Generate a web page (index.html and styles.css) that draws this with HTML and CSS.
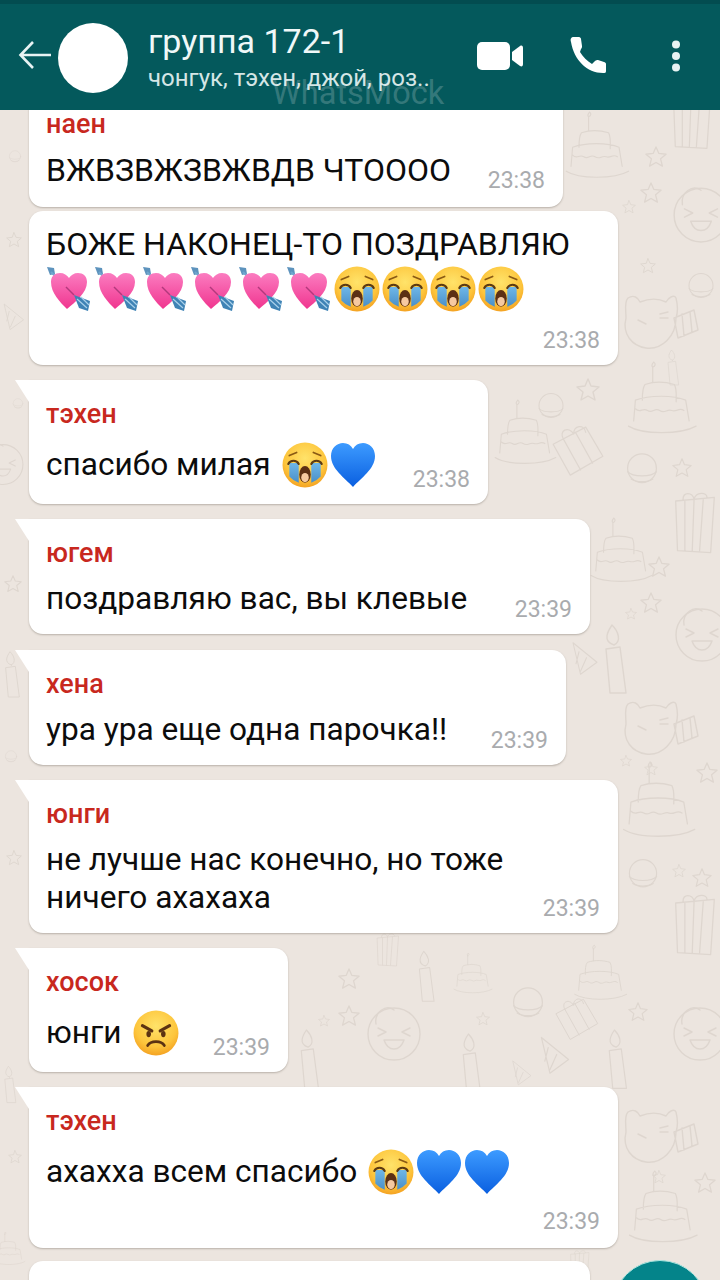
FILE: index.html
```html
<!DOCTYPE html>
<html lang="en">

<head>
    <meta charset="UTF-8">
    <meta name="viewport" content="width=device-width, initial-scale=1.0">
    <title>группа 172-1</title>
    <link rel="stylesheet" href="styles.css">
</head>

<body>
    <!-- shared drawings -->
    <svg class="defs" width="0" height="0">
        <defs>
            <radialGradient id="faceFill" cx="50%" cy="35%" r="70%">
                <stop offset="0" stop-color="#ffe36a" />
                <stop offset="0.65" stop-color="#fdc53c" />
                <stop offset="1" stop-color="#f29a1c" />
            </radialGradient>
            <linearGradient id="pinkFill" x1="0" y1="0" x2="0" y2="1">
                <stop offset="0" stop-color="#fb7cc0" />
                <stop offset="1" stop-color="#f0358f" />
            </linearGradient>
            <linearGradient id="blueFill" x1="0" y1="0" x2="0" y2="1">
                <stop offset="0" stop-color="#3d9bff" />
                <stop offset="1" stop-color="#0a5fe0" />
            </linearGradient>
            <linearGradient id="tearFill" x1="0" y1="0" x2="0" y2="1">
                <stop offset="0" stop-color="#6fb7e8" />
                <stop offset="1" stop-color="#4a8fc8" />
            </linearGradient>
            <symbol id="crying" viewBox="0 0 44 44">
                <circle cx="22" cy="22" r="21.5" fill="url(#faceFill)" />
                <path d="M7 20h9v19a21 21 0 0 1-9-6z" fill="url(#tearFill)" />
                <path d="M28 20h9v13a21 21 0 0 1-9 6z" fill="url(#tearFill)" />
                <path d="M6 21c2-4 8-4 10 0M28 21c2-4 8-4 10 0" fill="none" stroke="#5c3a12" stroke-width="2" stroke-linecap="round" />
                <path d="M7 13l7-3M37 13l-7-3" fill="none" stroke="#8a5a14" stroke-width="1.6" stroke-linecap="round" />
                <ellipse cx="22" cy="31" rx="5.5" ry="8" fill="#5c3014" />
                <ellipse cx="22" cy="34" rx="3.6" ry="4.4" fill="#f6c9a0" />
            </symbol>
            <symbol id="angry" viewBox="0 0 44 44">
                <circle cx="22" cy="22" r="21.5" fill="url(#faceFill)" />
                <path d="M9 15l9 5M35 15l-9 5" fill="none" stroke="#5c3212" stroke-width="3" stroke-linecap="round" />
                <ellipse cx="15" cy="23" rx="2.2" ry="3" fill="#5c3212" />
                <ellipse cx="29" cy="23" rx="2.2" ry="3" fill="#5c3212" />
                <path d="M14 34c3-5 13-5 16 0" fill="none" stroke="#5c3212" stroke-width="2.6" stroke-linecap="round" />
            </symbol>
            <symbol id="blue-heart" viewBox="0 0 46 46">
                <path d="M23 45C15 36 1 27 1 14 1 6 7 1 13 1c4.500 0 8 2 10 6 2-4 5.500-6 10-6 6 0 12 5 12 13 0 13-14 22-22 31z" fill="url(#blueFill)" />
            </symbol>
            <symbol id="arrow-heart" viewBox="0 0 46 46">
                <path d="M1 1l3 8 5-1-1-6z" fill="#5d93bd" />
                <path d="M5 6l34 34" stroke="#6fa6cf" stroke-width="2" />
                <path d="M21 43C14 36 5 27 5 16 5 10 9 7 14 7c4 0 7 2 9 5 2-3 5-5 9-5 5 0 9 3 9 9 0 11-12 20-20 27z" fill="url(#pinkFill)" />
                <path d="M28 29l16 6-2 10-9-3z" fill="#3f83b5" />
                <path d="M31 33l10 9M35 31l8 8" stroke="#a9d0ea" stroke-width="1.200" />
                <path d="M20 21l8 8" stroke="#b2397c" stroke-width="1.500" />
            </symbol>

            <symbol id="d-cake" viewBox="0 0 90 90" overflow="visible">
                <path d="M32 24V6M32 6c-3-3 2-6 1-6 3 2 2 5-1 6M20 44c0-8 0-14 3-18 12-4 24-3 34 0 3 6 2 12 2 20M10 68l2-24c16-6 44-6 58 0l4 24M4 74c16 10 60 10 78 0M12 54c6 6 8-2 14 2s8-4 14 0 8-2 14 0 8-4 14 0" />
            </symbol>
            <symbol id="d-gift" viewBox="0 0 70 70" overflow="visible">
                <path d="M6 26l38-20 20 34-38 22zM18 20l20 36M32 12l20 36M30 14c-6-10-18-4-12 6M30 14c0-10 12-12 14-2" />
            </symbol>
            <symbol id="d-box" viewBox="0 0 50 70" overflow="visible">
                <path d="M4 10l42-4-4 60-36-2zM14 10l0 54M24 8l-2 56M34 8l-4 56M12 8c0-8 10-8 12 0 2-8 14-8 14-2" />
            </symbol>
            <symbol id="d-ball" viewBox="0 0 40 40" overflow="visible">
                <circle cx="20" cy="18" r="16" />
                <path d="M4 22c6 6 26 6 32 0M8 30c6 4 18 4 24 0" />
            </symbol>
            <symbol id="d-face" viewBox="0 0 60 60" overflow="visible">
                <circle cx="30" cy="32" r="26" />
                <path d="M12 22c-2-12 10-20 18-14M14 26l8 4-8 4M46 26l-8 4 8 4M20 38c4 12 16 12 20 0z" />
            </symbol>
            <symbol id="d-cat" viewBox="0 0 76 60" overflow="visible">
                <path d="M6 6c6-4 10 0 12 4 10-4 18-4 26 0 2-4 8-8 10-4 2 8 2 14 0 20 0 18-14 32-30 30C10 54 0 42 4 26 4 18 2 10 6 6zM16 28l8 4M38 22l8-2M38 26l8 0M52 26l20-8 4 20-20 8zM60 22l2 22M68 20l2 20" />
            </symbol>
            <symbol id="d-candle" viewBox="0 0 30 70" overflow="visible">
                <path d="M6 24l14-2 6 46H10zM14 20C2 16 8 6 12 0c6 6 10 16 2 20z" />
            </symbol>
            <symbol id="d-star" viewBox="0 0 24 24" overflow="visible">
                <path d="M12 1l3 7 8 1-6 5 2 8-7-4-7 4 2-8-6-5 8-1z" />
            </symbol>
            <symbol id="d-hat" viewBox="0 0 40 50" overflow="visible">
                <path d="M4 2l32 26-22 16zM12 14l-4 16M22 22l-8 18" />
            </symbol>
        </defs>
    </svg>

    <!-- wallpaper doodles -->
    <svg class="wallpaper" width="720" height="1280" viewBox="0 0 720 1280">
        <g class="doodles">
            <use href="#d-cake" x="563" y="112" width="72" height="72" />
            <use href="#d-box" x="670" y="90" width="44" height="62" />
            <use href="#d-star" x="645" y="146" width="22" height="22" />
            <use href="#d-star" x="640" y="182" width="22" height="22" />
            <use href="#d-star" x="622" y="200" width="14" height="14" />
            <use href="#d-face" x="670" y="182" width="62" height="62" />
            <use href="#d-star" x="640" y="258" width="16" height="16" />
            <use href="#d-ball" x="686" y="272" width="30" height="30" />
            <use href="#d-cat" x="622" y="292" width="76" height="60" />
            <use href="#d-candle" x="664" y="350" width="18" height="36" />
            <use href="#d-cake" x="625" y="362" width="78" height="78" />
            <use href="#d-ball" x="536" y="392" width="30" height="30" />
            <use href="#d-star" x="576" y="378" width="24" height="24" />
            <use href="#d-cake" x="492" y="400" width="70" height="70" />
            <use href="#d-gift" x="548" y="422" width="60" height="60" />
            <use href="#d-ball" x="624" y="452" width="36" height="36" />
            <use href="#d-star" x="672" y="458" width="20" height="20" />
            <use href="#d-box" x="672" y="488" width="46" height="72" />
            <use href="#d-cake" x="588" y="515" width="70" height="76" />
            <use href="#d-star" x="648" y="556" width="22" height="22" />
            <use href="#d-star" x="640" y="592" width="22" height="22" />
            <use href="#d-star" x="625" y="608" width="12" height="12" />
            <use href="#d-face" x="672" y="600" width="60" height="66" />
            <use href="#d-candle" x="600" y="625" width="30" height="70" />
            <use href="#d-hat" x="570" y="640" width="30" height="40" />
            <use href="#d-cat" x="622" y="698" width="76" height="60" />
            <use href="#d-star" x="620" y="755" width="12" height="12" />
            <use href="#d-star" x="644" y="762" width="14" height="14" />
            <use href="#d-star" x="696" y="762" width="22" height="22" />
            <use href="#d-cake" x="620" y="762" width="82" height="82" />
            <use href="#d-ball" x="626" y="858" width="34" height="34" />
            <use href="#d-star" x="672" y="864" width="14" height="14" />
            <use href="#d-star" x="692" y="868" width="20" height="20" />
            <use href="#d-box" x="672" y="890" width="46" height="72" />
            <use href="#d-cake" x="566" y="945" width="72" height="60" />
            <use href="#d-box" x="366" y="933" width="44" height="35" />
            <use href="#d-candle" x="415" y="945" width="22" height="64" />
            <use href="#d-cake" x="452" y="950" width="44" height="50" />
            <use href="#d-ball" x="510" y="985" width="36" height="38" />
            <use href="#d-gift" x="552" y="995" width="50" height="50" />
            <use href="#d-star" x="338" y="968" width="22" height="22" />
            <use href="#d-star" x="338" y="1005" width="22" height="22" />
            <use href="#d-star" x="318" y="1015" width="12" height="12" />
            <use href="#d-star" x="476" y="1012" width="14" height="14" />
            <use href="#d-star" x="628" y="1002" width="20" height="20" />
            <use href="#d-face" x="364" y="1000" width="60" height="64" />
            <use href="#d-face" x="670" y="1000" width="60" height="64" />
            <use href="#d-candle" x="296" y="1030" width="26" height="60" />
            <use href="#d-candle" x="458" y="1034" width="26" height="60" />
            <use href="#d-candle" x="604" y="1030" width="26" height="60" />
            <use href="#d-hat" x="538" y="1035" width="34" height="44" />
            <use href="#d-hat" x="510" y="1060" width="24" height="28" />
            <use href="#d-cat" x="622" y="1106" width="76" height="60" />
            <use href="#d-star" x="652" y="1170" width="14" height="14" />
            <use href="#d-star" x="694" y="1172" width="22" height="22" />
            <use href="#d-cake" x="626" y="1168" width="78" height="84" />
            <use href="#d-box" x="560" y="1250" width="40" height="30" />
            <use href="#d-ball" x="8" y="150" width="14" height="14" />
            <use href="#d-star" x="6" y="232" width="16" height="16" />
            <use href="#d-hat" x="2" y="300" width="24" height="36" />
            <use href="#d-ball" x="12" y="398" width="12" height="12" />
            <use href="#d-face" x="-20" y="440" width="46" height="46" />
            <use href="#d-star" x="4" y="575" width="18" height="18" />
            <use href="#d-candle" x="2" y="650" width="20" height="50" />
            <use href="#d-ball" x="4" y="750" width="14" height="14" />
            <use href="#d-star" x="6" y="850" width="16" height="16" />
            <use href="#d-candle" x="2" y="1060" width="16" height="50" />
            <use href="#d-star" x="8" y="1150" width="14" height="14" />
            <use href="#d-cake" x="-8" y="1230" width="36" height="40" />
        </g>
    </svg>

    <header class="app-header">
        <svg class="back-icon" width="33" height="32" viewBox="0 0 33 32">
            <path d="M33 16H3M15 3L2.500 16 15 29" fill="none" stroke="#e8f3f3" stroke-width="2.600" />
        </svg>
        <div class="avatar"></div>
        <div class="chat-title">
            <div class="chat-name">группа 172-1</div>
            <div class="chat-members">чонгук, тэхен, джой, роз..</div>
        </div>
        <div class="header-actions">
            <svg class="video-icon" width="46" height="28" viewBox="0 0 46 28">
                <rect x="0" y="0" width="33" height="28" rx="5" fill="#fff" />
                <path d="M35 10l8-6c2-1 3 0 3 2v16c0 2-1 3-3 2l-8-6z" fill="#fff" />
            </svg>
            <svg class="phone-icon" width="36" height="36" viewBox="0 0 36 36">
                <path d="M1 5C0 2 1 0 4 0h5c1 0 2 1 2 2l1 7c0 1 0 2-1 3l-1 3c3 5 7 9 12 12l3-3c1-1 2-1 3-1l6 2c1 0 2 1 2 2v7c0 2-1 2-3 2C17 36 4 23 1 5z" fill="#fff" />
            </svg>
            <svg class="menu-icon" width="10" height="32" viewBox="0 0 10 32">
                <circle cx="5" cy="4.500" r="4" fill="#e8f3f3" />
                <circle cx="5" cy="16" r="4" fill="#e8f3f3" />
                <circle cx="5" cy="27.500" r="4" fill="#e8f3f3" />
            </svg>
        </div>
        <div class="watermark">WhatsMock</div>
    </header>

    <main class="chat-messages">
        <div class="message first width-534">
            <div class="sender">наен</div>
            <div class="message-row">
                <div class="message-text caps">ВЖВЗВЖЗВЖВДВ ЧТОООО</div>
                <div class="time">23:38</div>
            </div>
        </div>

        <div class="message follow width-589">
            <div class="message-text caps">БОЖЕ НАКОНЕЦ-ТО ПОЗДРАВЛЯЮ</div>
            <div class="emoji-line">
                <svg class="emoji"><use href="#arrow-heart" /></svg>
                <svg class="emoji"><use href="#arrow-heart" /></svg>
                <svg class="emoji"><use href="#arrow-heart" /></svg>
                <svg class="emoji"><use href="#arrow-heart" /></svg>
                <svg class="emoji"><use href="#arrow-heart" /></svg>
                <svg class="emoji"><use href="#arrow-heart" /></svg>
                <svg class="emoji"><use href="#crying" /></svg>
                <svg class="emoji"><use href="#crying" /></svg>
                <svg class="emoji"><use href="#crying" /></svg>
                <svg class="emoji"><use href="#crying" /></svg>
            </div>
            <div class="time-row"><div class="time">23:38</div></div>
        </div>

        <div class="message tail width-459">
            <div class="sender">тэхен</div>
            <div class="message-row">
                <div class="message-text with-emoji">спасибо милая
                    <svg class="emoji"><use href="#crying" /></svg><svg class="emoji"><use href="#blue-heart" /></svg>
                </div>
                <div class="time">23:38</div>
            </div>
        </div>

        <div class="message tail width-561 spaced">
            <div class="sender">югем</div>
            <div class="message-row">
                <div class="message-text">поздравляю вас, вы клевые</div>
                <div class="time">23:39</div>
            </div>
        </div>

        <div class="message tail width-537">
            <div class="sender">хена</div>
            <div class="message-row">
                <div class="message-text">ура ура еще одна парочка!!</div>
                <div class="time">23:39</div>
            </div>
        </div>

        <div class="message tail width-589">
            <div class="sender">юнги</div>
            <div class="message-row">
                <div class="message-text">не лучше нас конечно, но тоже<br>ничего ахахаха</div>
                <div class="time">23:39</div>
            </div>
        </div>

        <div class="message tail width-259">
            <div class="sender">хосок</div>
            <div class="message-row">
                <div class="message-text with-emoji">юнги
                    <svg class="emoji"><use href="#angry" /></svg>
                </div>
                <div class="time">23:39</div>
            </div>
        </div>

        <div class="message tail width-589 tall">
            <div class="sender">тэхен</div>
            <div class="message-text with-emoji">ахахха всем спасибо
                <svg class="emoji"><use href="#crying" /></svg><svg class="emoji"><use href="#blue-heart" /></svg><svg class="emoji"><use href="#blue-heart" /></svg>
            </div>
            <div class="time-row"><div class="time">23:39</div></div>
        </div>

        <div class="message follow width-561 cut"></div>
    </main>

    <div class="fab-clip">
        <div class="fab"></div>
    </div>
</body>

</html>
```

FILE: styles.css
```css
* {
    box-sizing: border-box;
}

html,
body {
    margin: 0;
    width: 720px;
    height: 1280px;
    overflow: hidden;
}

body {
    position: relative;
    background-color: #ece5df;
    font-family: Roboto, "Liberation Sans", sans-serif;
    color: #0c0c0c;
}

.defs {
    position: absolute;
}

.wallpaper {
    position: absolute;
    top: 0;
    left: 0;
}

.doodles {
    fill: none;
    stroke: #ded6cf;
    stroke-width: 1.4;
    stroke-linejoin: round;
    stroke-linecap: round;
}

.app-header {
    position: relative;
    z-index: 2;
    display: flex;
    align-items: center;
    height: 110px;
    padding: 5px 0 0 18px;
    background-color: #04595c;
    border-top: 4px solid #034c50;
    color: #fff;
}

.back-icon {
    flex: none;
    margin-top: -10px;
}

.avatar {
    flex: none;
    width: 70px;
    height: 70px;
    margin-left: 7px;
    margin-top: -4px;
    border-radius: 50%;
    background-color: #fff;
}

.chat-title {
    margin-left: 20px;
    width: 329px;
    margin-top: -6px;
}

.chat-name {
    font-size: 34px;
    line-height: 40px;
    color: #f0f8f8;
}

.chat-members {
    font-size: 24px;
    line-height: 28px;
    margin-top: 3px;
    color: #d5e6e6;
}

.header-actions {
    display: flex;
    align-items: center;
    margin-top: -8px;
}

.phone-icon {
    margin-left: 47px;
    margin-top: -1px;
}

.menu-icon {
    margin-left: 65px;
}

.watermark {
    position: absolute;
    left: 272px;
    top: 71px;
    font-size: 32.5px;
    line-height: 36px;
    color: rgba(255, 255, 255, 0.2);
}

.chat-messages {
    position: relative;
    z-index: 1;
    display: flex;
    flex-direction: column;
    height: 1170px;
    padding-left: 29px;
    gap: 15px;
    overflow: hidden;
}

.message {
    position: relative;
    flex: none;
    padding: 20px 18px 16px 17px;
    background-color: #fff;
    border-radius: 14px;
    box-shadow: 0 1px 2px rgba(90, 80, 70, 0.35);
}

.message.first {
    margin-top: -20px;
    padding-bottom: 18px;
}

.message.follow {
    margin-top: -11px;
    padding-top: 14px;
    padding-bottom: 12px;
}

.message.cut {
    margin-top: -2px;
    height: 80px;
}

.message.tail {
    border-top-left-radius: 0;
}

.message.tail::before {
    content: "";
    position: absolute;
    top: 0;
    left: -14px;
    width: 14px;
    height: 22px;
    background-color: #fff;
    clip-path: polygon(0 0, 100% 0, 100% 100%);
}

.message.spaced {
    margin-bottom: 1px;
}

.message.tall {
    padding-bottom: 14px;
}

.width-259 { width: 259px; }
.width-459 { width: 459px; }
.width-534 { width: 534px; }
.width-537 { width: 537px; }
.width-561 { width: 561px; }
.width-589 { width: 589px; }

.sender {
    font-size: 27px;
    line-height: 28px;
    font-weight: 500;
    color: #c8281e;
    margin-bottom: 13px;
}

.message-row {
    display: flex;
    justify-content: space-between;
    align-items: flex-end;
}

.message-text {
    font-size: 31.6px;
    line-height: 38px;
    white-space: nowrap;
}

.message-text.caps {
    font-size: 32px;
}

.message-text.with-emoji {
    display: flex;
    align-items: center;
    gap: 11px;
    height: 47px;
}

.message-text.with-emoji .emoji + .emoji {
    margin-left: -11px;
}

.emoji-line {
    display: flex;
    height: 48px;
    margin-top: 3px;
}

.emoji {
    flex: none;
    width: 46px;
    height: 46px;
    margin-right: 2px;
}

.time {
    flex: none;
    font-size: 23px;
    line-height: 24px;
    margin-bottom: -4px;
    color: #a9abae;
}

.time-row {
    display: flex;
    justify-content: flex-end;
    margin-top: 15px;
}

.time-row .time {
    margin-bottom: 0;
}

.fab-clip {
    position: absolute;
    z-index: 3;
    left: 612px;
    top: 1260px;
    width: 96px;
    height: 20px;
    overflow: hidden;
}

.fab {
    width: 96px;
    height: 96px;
    border-radius: 50%;
    background-color: #04848a;
    border: 1px solid #aee6e0;
}
```
